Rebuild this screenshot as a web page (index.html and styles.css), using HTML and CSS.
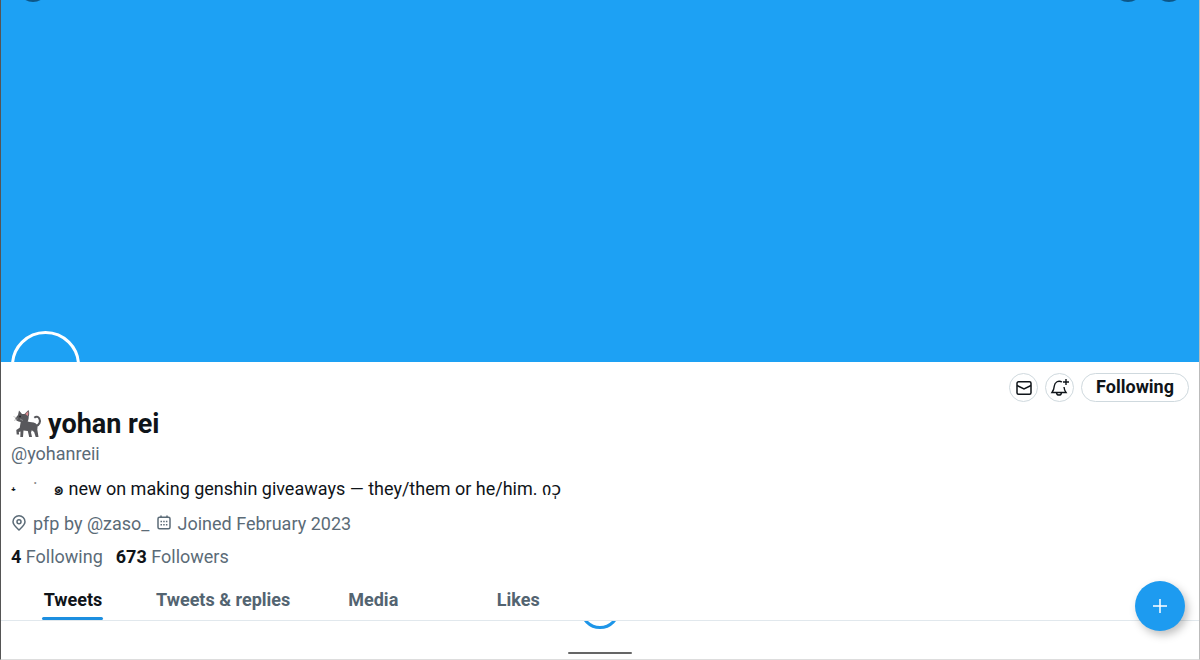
FILE: index.html
```html
<!DOCTYPE html>
<html lang="en">
<head>
<meta charset="utf-8">
<meta name="viewport" content="width=device-width, initial-scale=1">
<title>yohan rei (@yohanreii)</title>
<link rel="stylesheet" href="styles.css">
</head>
<body>
<div class="app">
  <header class="banner">
    <span class="bar-button bar-back"></span>
    <span class="bar-button bar-search"></span>
    <span class="bar-button bar-more"></span>
    <span class="avatar"></span>
  </header>

  <main class="profile">
    <div class="actions">
      <button class="round" type="button" aria-label="Message">
        <svg width="18" height="18" viewBox="0 0 18 18"><rect x="2" y="2.800" width="14" height="12.400" rx="1.500"/><path d="M2 6.500l7 3.500 7-3.500"/></svg>
      </button>
      <button class="round" type="button" aria-label="Notify">
        <svg class="bell" width="22" height="20" viewBox="0 0 22 20"><path d="M13 4C9.500 2 5.700 4 5.300 8c-.2 3-.8 4.400-2.300 6.500h14c-1.400-1.900-1.800-3.300-2-5.500M7.500 14.800c.5 3 4.500 3 5 0M17 1v6M14 4h6"/></svg>
      </button>
      <button class="following" type="button">Following</button>
    </div>

    <h1 class="name">
      <svg class="cat" width="30" height="30" viewBox="0 0 30 30" aria-hidden="true">
        <path class="tail" d="M23 17c3.500-1 4.800-4.500 3.300-7.500-1-2-3.300-2.200-5-.8"/>
        <path class="fur" d="M6 1.500L9 5h2.500L15.500 1c.9 2 .9 4.500.2 6.500.1 2-.4 3.600-1 5 3 1.300 5.300.3 7.800 1.800 2.200 1.500 2.300 4 1.800 6.200L25.500 28h-2.800l-1.600-5-2.300-1.800-.8 2.300 1 4.500h-2.800l-1.400-6-4.300-.5L10 28H7.300l.2-5.500-1.700.6.400 2.400H3.700L3.300 21l3.400-2.300 1-5.700C4.500 12.500 2.300 11 2.300 9.200L5 6z"/>
        <path class="ear" d="M12.300 5l2.900-2.800c.3 1.800.1 3.200-.5 4.800z"/>
        <path class="whisker" d="M.5 7.500l4 1.800M1 11.500l3.500-1.500M7 10l3 1.500"/>
        <circle class="eye" cx="7" cy="7.500" r=".9"/>
      </svg>
      <span>yohan rei</span>
    </h1>
    <p class="handle">@yohanreii</p>
    <p class="bio"><span class="spark">˖</span><span class="dot">˙</span><span class="curl">๑</span> new on making genshin giveaways — they/them or he/him. <span class="marks">იɔ̩</span></p>
    <div class="meta">
      <span class="meta-item">
        <svg width="16" height="18" viewBox="0 0 16 18"><path d="M8 15C4.500 11.800 2 9.800 2 6.800a6 6 0 0 1 12 0C14 9.800 11.500 11.800 8 15z"/><circle cx="8" cy="6.800" r="2"/></svg>
        pfp by @zaso_
      </span>
      <span class="meta-item">
        <svg width="16" height="18" viewBox="0 0 16 18"><rect x="2" y="2.200" width="12" height="11.600" rx="1.500"/><path d="M5 .500v2.500M11 .500v2.500"/><path class="days" d="M4.500 6.500h7M4.500 9.800h7"/></svg>
        Joined February 2023
      </span>
    </div>
    <div class="counts">
      <a href="#following"><b>4</b> Following</a>
      <a href="#followers"><b>673</b> Followers</a>
    </div>
  </main>

  <nav class="tabs">
    <a class="tab active" href="#tweets">Tweets</a>
    <a class="tab" href="#replies">Tweets &amp; replies</a>
    <a class="tab" href="#media">Media</a>
    <a class="tab" href="#likes">Likes</a>
  </nav>

  <section class="feed">
    <span class="spinner"></span>
    <span class="home-bar"></span>
  </section>

  <button class="compose" type="button" aria-label="New tweet">
    <svg width="16" height="16" viewBox="0 0 16 16"><path d="M8 1v14M1 8h14"/></svg>
  </button>
</div>
</body>
</html>
```
FILE: styles.css
```css
* { box-sizing: border-box; }
body {
  margin: 0;
  background: #fff;
  color: #0f1419;
  font: 18px/24px Roboto, "Noto Sans", "DejaVu Sans", sans-serif;
}
h1, p { margin: 0; }
a { color: inherit; text-decoration: none; }
button { margin: 0; padding: 0; font: inherit; color: inherit; cursor: pointer; }
svg { fill: none; stroke: currentColor; stroke-width: 1.5; flex: none; }

.app {
  position: relative;
  display: flex;
  flex-direction: column;
  min-height: 100vh;
  overflow: hidden;
  border-left: 1px solid #555;
  border-right: 1px solid #bbb;
  border-bottom: 1px solid #ddd;
}
.banner {
  position: relative;
  aspect-ratio: 1198 / 362;
  overflow: hidden;
  background: #1da1f4;
}
.bar-button {
  position: absolute;
  top: -28px;
  width: 30px;
  height: 30px;
  border-radius: 50%;
  background: #0d5687;
}
.bar-back { left: 17px; }
.bar-search { right: 56px; }
.bar-more { right: 15px; }
.avatar {
  position: absolute;
  left: 10px;
  bottom: -38px;
  width: 69px;
  height: 69px;
  border: 3px solid #fff;
  border-radius: 50%;
}

.profile { padding: 11px 10px 0; }
.actions { display: flex; justify-content: flex-end; gap: 7px; }
.round, .following {
  display: flex;
  align-items: center;
  justify-content: center;
  height: 29px;
  border: 1px solid #cfd9de;
  border-radius: 15px;
  background: #fff;
}
.round { width: 29px; }
.bell { stroke-width: 1.4; }
.following { padding: 0 14px 2px; font-weight: 700; }

.name {
  display: flex;
  align-items: center;
  gap: 5px;
  margin-top: 5px;
  padding-left: 2px;
  font-size: 27px;
  line-height: 34px;
  font-weight: 700;
}
.cat { stroke: none; }
.tail { stroke: #58585c; stroke-width: 2; }
.fur { fill: #58585c; }
.ear { fill: #d98a8f; }
.whisker { stroke: #aaa; stroke-width: .6; }
.eye { fill: #222; }
.handle { margin-top: 1px; color: #5b6b77; }
.bio { margin-top: 11px; }
.spark { display: inline-block; width: 22px; }
.dot { display: inline-block; width: 20px; color: #888; }
.marks { font-family: "DejaVu Sans", sans-serif; }
.meta { display: flex; flex-wrap: wrap; gap: 6px; margin-top: 11px; color: #5b6b77; }
.meta-item { display: flex; align-items: center; gap: 6px; }
.days { stroke-dasharray: 1.5 1.2; }
.counts { display: flex; gap: 13px; margin-top: 9px; color: #5b6b77; }
.counts b { color: #0f1419; }

.tabs {
  display: flex;
  gap: 1px;
  margin-top: 12px;
  border-bottom: 1px solid #e1e8ed;
  color: #536471;
  font-weight: 700;
}
.tab {
  position: relative;
  min-width: 144px;
  padding: 7px 10px 8px;
  text-align: center;
}
.active { color: #0f1419; }
.active::after {
  content: "";
  position: absolute;
  left: 41px;
  right: 42px;
  bottom: 0;
  height: 3px;
  border-radius: 2px;
  background: #1d8fe0;
}
.feed {
  position: relative;
  flex: 1;
  min-height: 38px;
  overflow: hidden;
}
.spinner {
  position: absolute;
  top: -32px;
  left: calc(50% - 20px);
  width: 40px;
  height: 40px;
  border: 3px solid #1d95e8;
  border-radius: 50%;
}
.home-bar {
  position: absolute;
  left: calc(50% - 32px);
  bottom: 5px;
  width: 64px;
  height: 2px;
  border-radius: 2px;
  background: #666;
}
.compose {
  position: absolute;
  right: 14px;
  bottom: 28px;
  display: flex;
  align-items: center;
  justify-content: center;
  width: 50px;
  height: 50px;
  border: 0;
  border-radius: 50%;
  background: #1d9bf0;
  color: #fff;
  box-shadow: 3px 4px 8px rgba(0, 0, 0, .25);
}
```
